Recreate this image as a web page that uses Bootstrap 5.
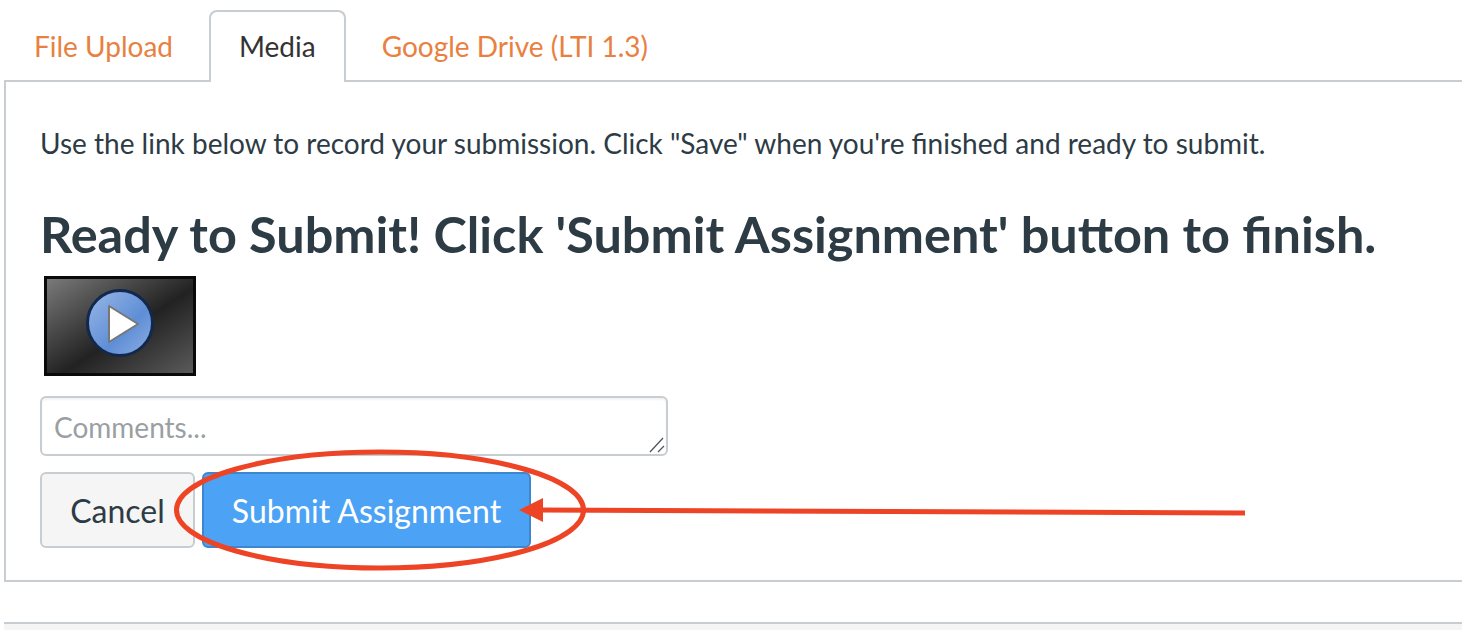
<!DOCTYPE html>
<html lang="en">
<head>
  <meta charset="UTF-8" />
  <meta name="viewport" content="width=device-width, initial-scale=1.0" />
  <title>Submit Assignment</title>
  <link href="https://cdn.jsdelivr.net/npm/bootstrap@5.3.0/dist/css/bootstrap.min.css" rel="stylesheet" />
  <style>
    html, body { height: 630px; overflow: hidden; }
    body { font-family: Lato, "Liberation Sans", sans-serif; font-size: 28px; color: #2d3b45; background: #fff; position: relative; }
    .page-wrap { padding: 10px 0 0 4px; }
    .tab-strip { border-bottom: 0; gap: 6px; position: relative; z-index: 1; margin-bottom: -2px; }
    .tab-strip .nav-link { height: 72px; padding: 0 28px 3px; display: flex; align-items: center; border: 2px solid transparent; border-bottom: 0; border-radius: 8px 8px 0 0; color: #e8813f; margin: 0; }
    .tab-strip .nav-link.active { border-color: #c7cdd1; color: #333; background: #fff; }
    .tab-panel { height: 502px; border: 2px solid #c7cdd1; border-right: 0; padding: 43px 0 0 34px; }
    .intro-line { line-height: 37px; margin: 0 0 42px; }
    .ready-title { font-size: 50.4px; font-weight: 700; line-height: 60px; margin: 0 0 12px; color: #2d3b45; }
    .media-thumb { display: block; margin: 0 0 20px 4px; filter: blur(.6px); }
    .comment-box { width: 628px; height: 60px; position: relative; margin-bottom: 16px; }
    .comment-box textarea { width: 100%; height: 100%; font-size: 28px; color: #2d3b45; border: 2px solid #c7cdd1; border-radius: 6px; padding: 11px 12px 9px; line-height: 36px; resize: none; box-shadow: inset 0 2px 2px rgba(0,0,0,.05); }
    .comment-box textarea::placeholder { color: #9a9fa3; }
    .grip-mark { position: absolute; right: 2px; bottom: 2px; }
    .form-actions { gap: 7px; }
    .form-btn { height: 76px; font-size: 32px; border-width: 2px; border-radius: 6px; padding: 1px 0 0; display: flex; align-items: center; justify-content: center; }
    .btn-cancel { width: 155px; background: #f5f5f5; border-color: #c7cdd1; color: #2d3b45; }
    .btn-submit { width: 329px; background: #4ca2f5; border-color: #3d87cf; color: #fff; }
    .next-panel { margin-top: 40px; height: 8px; background: #f5f5f5; border-top: 2px solid #c7cdd1; }
    .markup-layer { position: absolute; left: 0; top: 0; pointer-events: none; z-index: 5; }
  </style>
</head>
<body>
  <div class="page-wrap">
    <ul class="nav nav-tabs tab-strip">
      <li class="nav-item"><a class="nav-link" href="#">File Upload</a></li>
      <li class="nav-item"><a class="nav-link active" href="#">Media</a></li>
      <li class="nav-item"><a class="nav-link" href="#">Google Drive (LTI 1.3)</a></li>
    </ul>
    <div class="tab-panel">
      <p class="intro-line">Use the link below to record your submission. Click "Save" when you're finished and ready to submit.</p>
      <h2 class="ready-title">Ready to Submit! Click 'Submit Assignment' button to finish.</h2>
      <svg class="media-thumb" width="152" height="100" viewBox="0 0 152 100" xmlns="http://www.w3.org/2000/svg">
        <defs>
          <linearGradient id="thumbBg" x1="0" y1="0" x2="1" y2="1">
            <stop offset="0" stop-color="#7c7c7c"/>
            <stop offset="0.55" stop-color="#222"/>
            <stop offset="1" stop-color="#5c5c5c"/>
          </linearGradient>
          <linearGradient id="playBg" x1="0" y1="0" x2="1" y2="1">
            <stop offset="0" stop-color="#9ab8e6"/>
            <stop offset="0.6" stop-color="#5f8ed6"/>
            <stop offset="1" stop-color="#8fb0e2"/>
          </linearGradient>
        </defs>
        <rect x="1.5" y="1.5" width="149" height="97" fill="url(#thumbBg)" stroke="#0a0a0a" stroke-width="3"/>
        <circle cx="76" cy="47" r="32.500" fill="url(#playBg)" stroke="#12284c" stroke-width="3"/>
        <path d="M65 30 L94 48 L65 66 Z" fill="#fff" stroke="#777" stroke-width="2" stroke-linejoin="round"/>
      </svg>
      <div class="comment-box">
        <textarea class="form-control" placeholder="Comments..."></textarea>
        <svg class="grip-mark" width="18" height="18" viewBox="0 0 18 18" xmlns="http://www.w3.org/2000/svg">
          <path d="M2 16 L15 2 M10 16 L16 10" stroke="#555" stroke-width="1.3" fill="none"/>
        </svg>
      </div>
      <div class="d-flex form-actions">
        <button type="button" class="btn form-btn btn-cancel">Cancel</button>
        <button type="button" class="btn form-btn btn-submit">Submit Assignment</button>
      </div>
    </div>
    <div class="next-panel"></div>
  </div>

  <svg class="markup-layer" width="1462" height="630" viewBox="0 0 1462 630" xmlns="http://www.w3.org/2000/svg">
    <ellipse cx="380" cy="510" rx="203.500" ry="58" fill="none" stroke="#ee4426" stroke-width="5"/>
    <path d="M1245 513 L540 510" stroke="#ee4426" stroke-width="5" fill="none"/>
    <path d="M519 510 L543 498 L543 522 Z" fill="#ee4426"/>
  </svg>

  <script src="https://cdn.jsdelivr.net/npm/bootstrap@5.3.0/dist/js/bootstrap.bundle.min.js"></script>
</body>
</html>
